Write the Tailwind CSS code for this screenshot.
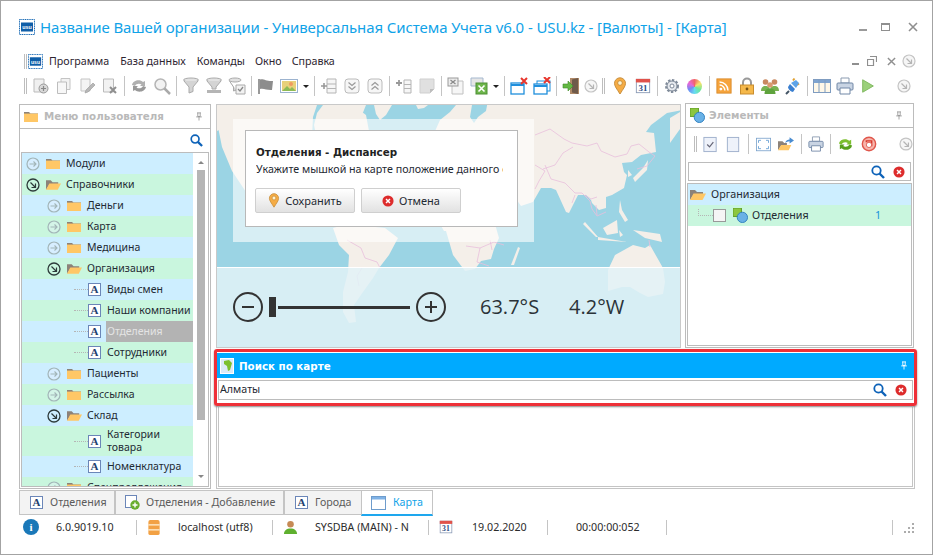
<!DOCTYPE html>
<html lang="ru">
<head>
<meta charset="UTF-8" />
<title>USU</title>
<script src="https://cdn.jsdelivr.net/npm/@tailwindcss/browser@4"></script>
</head>
<body class="m-0 bg-white">
<svg class="absolute w-0 h-0" aria-hidden="true">
  <symbol id="logo" viewBox="0 0 16 16"><rect x=".5" y=".5" width="15" height="15" fill="#fff" stroke="#1a6bb5" stroke-dasharray="1.2 .6"/><rect x="2" y="3.500" width="12" height="9" fill="#0f5ea8"/><text x="8" y="10.300" text-anchor="middle" font-family="Liberation Sans" font-weight="700" font-size="5.400" fill="#fff">usu</text></symbol>
  <symbol id="folder" viewBox="0 0 14 11"><path d="M0 1h5l1.500 1.500H14V3H0z" fill="#8c8279"/><rect y="2.600" width="14" height="8.400" fill="#ffc766"/></symbol>
  <symbol id="folder-open" viewBox="0 0 16 11"><path d="M0 11V1h5l2 2h6v2H4z" fill="#8c8279"/><path d="M0 11l3.500-6.500H16L12.500 11z" fill="#ffc766"/></symbol>
  <symbol id="arrow-r" viewBox="0 0 14 14"><circle cx="7" cy="7" r="6" fill="#eef" fill-opacity=".3" stroke="#a2b5b8" stroke-width="1.200"/><path d="M3.500 7h6.500M7.500 4.500L10 7 7.500 9.500" fill="none" stroke="#a2b5b8" stroke-width="1.100"/></symbol>
  <symbol id="arrow-d" viewBox="0 0 14 14"><circle cx="7" cy="7" r="6" fill="none" stroke="#2d3a3a" stroke-width="1.300"/><path d="M4.500 4.500L9.500 9.500M9.500 5.500v4h-4" fill="none" stroke="#2d3a3a" stroke-width="1.200"/></symbol>
  <symbol id="arrow-g" viewBox="0 0 14 14"><circle cx="7" cy="7" r="6" fill="#f6f6f6" stroke="#c4c4c4" stroke-width="1.200"/><path d="M4.500 4.500L9.500 9.500M9.500 5.500v4h-4" fill="none" stroke="#b5b5b5" stroke-width="1.200"/></symbol>
  <symbol id="lens" viewBox="0 0 14 14"><circle cx="5.500" cy="5.500" r="4.200" fill="none" stroke="#0d62b8" stroke-width="1.800"/><path d="M8.500 8.500L13 13" stroke="#0d62b8" stroke-width="2.400"/></symbol>
  <symbol id="cancel" viewBox="0 0 14 14"><circle cx="7" cy="7" r="6.500" fill="#dd2c2c"/><path d="M4.700 4.700l4.600 4.600M9.300 4.700l-4.600 4.600" stroke="#fff" stroke-width="1.700"/></symbol>
  <symbol id="pin" viewBox="0 0 10 11"><path d="M2.500 1h5M3.500 1v4.500h3V1M1.500 6h7M5 6v4.500" fill="none" stroke="currentColor" stroke-width="1.100"/></symbol>
  <symbol id="marker" viewBox="0 0 14 18"><path d="M7 17C4 12 1.500 9.500 1.500 6.300a5.500 5.500 0 0 1 11 0C12.500 9.500 10 12 7 17z" fill="#f5ac45" stroke="#c9903f"/><circle cx="7" cy="6" r="2.300" fill="#fff3d0" stroke="#b67c2b" stroke-width=".7"/></symbol>
  <symbol id="t-add" viewBox="0 0 18 18"><path d="M2 2h10v13H2z" fill="#f0f0f0" stroke="#bbb"/><circle cx="11.500" cy="11.500" r="4.500" fill="#d8d8d8" stroke="#999"/><path d="M9 11.500h5M11.500 9v5" stroke="#888" stroke-width="1.200"/></symbol>
  <symbol id="t-copy" viewBox="0 0 18 18"><path d="M6 1.500h9v11H6z" fill="#f2f2f2" stroke="#c4c4c4"/><path d="M2.500 5h9v11.500h-9z" fill="#f7f7f7" stroke="#bdbdbd"/></symbol>
  <symbol id="t-edit" viewBox="0 0 18 18"><path d="M3 2h9v12H3z" fill="#f4f4f4" stroke="#c4c4c4"/><path d="M7 16l1-3 7-7 2 2-7 7z" fill="#b8b8b8" stroke="#999" stroke-width=".6"/></symbol>
  <symbol id="t-del" viewBox="0 0 18 18"><path d="M2.500 2h10v13h-10z" fill="#f2f2f2" stroke="#bbb"/><path d="M9 10l6 6M15 10l-6 6" stroke="#8f8f8f" stroke-width="2"/></symbol>
  <symbol id="t-ref" viewBox="0 0 18 18"><path d="M2 8c1-5 8-6 11-3l2-1v5h-5l1.500-1.500C9.500 6 6 6.500 5 9z" fill="#b0b0b0"/><path d="M16 10c-1 5-8 6-11 3l-2 1V9h5l-1.500 1.500c2 1.500 5.500 1 6.500-1.500z" fill="#999"/></symbol>
  <symbol id="t-lens" viewBox="0 0 18 18"><circle cx="7.500" cy="7.500" r="5.500" fill="#f2f2f2" stroke="#b5b5b5" stroke-width="1.500"/><path d="M11.500 11.500L17 17" stroke="#aaa" stroke-width="2.500"/></symbol>
  <symbol id="t-fun" viewBox="0 0 18 18"><ellipse cx="9" cy="3" rx="7.500" ry="2" fill="#e2e2e2" stroke="#aaa"/><path d="M2 4l5 6v6l4-1.500V10l5-6" fill="#d4d4d4" stroke="#aaa"/></symbol>
  <symbol id="t-fun2" viewBox="0 0 18 18"><ellipse cx="9" cy="3" rx="7.500" ry="2" fill="#e2e2e2" stroke="#aaa"/><path d="M2 4l5 6v2h4v-2l5-6" fill="#d4d4d4" stroke="#aaa"/><path d="M2 13h14v3H2z" fill="#b5b5b5"/></symbol>
  <symbol id="t-fun3" viewBox="0 0 18 18"><ellipse cx="7" cy="3" rx="6" ry="2" fill="#e2e2e2" stroke="#aaa"/><path d="M1.500 4l4 6v4l3-1" fill="#d4d4d4" stroke="#aaa"/><path d="M8 8h9v9H8z" fill="#f2f2f2" stroke="#aaa"/><path d="M10 12l2 2 3-4" fill="none" stroke="#888" stroke-width="1.300"/></symbol>
  <symbol id="t-flag" viewBox="0 0 18 18"><path d="M2 2v15" stroke="#777" stroke-width="1.500"/><path d="M3 2.500c4-1 6 2 13 1.500l-1 9c-5 .5-8-2-12-1z" fill="#8d8d8d"/></symbol>
  <symbol id="t-img" viewBox="0 0 18 18"><rect x=".5" y="2.500" width="17" height="13" fill="#fff" stroke="#9cb3cf"/><rect x="2" y="4" width="14" height="10" fill="#e8d07a"/><path d="M2 14l5-5 3 3 2-2 4 4z" fill="#8dbb55"/><circle cx="11" cy="7" r="2" fill="#f09a60"/></symbol>
  <symbol id="t-col" viewBox="0 0 18 18"><path d="M7 2h9v14H7z" fill="#f6f6f6" stroke="#b5b5b5"/><path d="M7 7h9M7 11.500h9" stroke="#b5b5b5"/><path d="M1 9h6M4 6v6" stroke="#999" stroke-width="1.600"/></symbol>
  <symbol id="t-down" viewBox="0 0 18 18"><rect x="2" y="2" width="14" height="14" rx="3" fill="#f6f6f6" stroke="#bbb"/><path d="M5.500 5.500L9 8.500l3.500-3M5.500 9.500L9 12.500l3.500-3" fill="none" stroke="#999" stroke-width="1.200"/></symbol>
  <symbol id="t-up" viewBox="0 0 18 18"><rect x="2" y="2" width="14" height="14" rx="3" fill="#f6f6f6" stroke="#bbb"/><path d="M5.500 8.500L9 5.500l3.500 3M5.500 12.500L9 9.500l3.500 3" fill="none" stroke="#999" stroke-width="1.200"/></symbol>
  <symbol id="t-plus" viewBox="0 0 18 18"><path d="M9 3h7v13H9z" fill="#f6f6f6" stroke="#b5b5b5"/><path d="M9 7.500h7M9 11.500h7" stroke="#b5b5b5"/><path d="M1 6h6M4 3v6" stroke="#999" stroke-width="1.800"/></symbol>
  <symbol id="t-note" viewBox="0 0 18 18"><path d="M2 2h14v10l-4 4H2z" fill="#e0e0e0" stroke="#cfcfcf"/><path d="M12 16v-4h4z" fill="#bdbdbd"/></symbol>
  <symbol id="t-xl" viewBox="0 0 18 18"><path d="M5 4h11v13H5z" fill="#f6f6f6" stroke="#c0c0c0"/><rect x="1" y="1" width="10" height="8" fill="#ececec" stroke="#999"/><path d="M3.500 3l5 4M8.500 3l-5 4" stroke="#888" stroke-width="1.200"/></symbol>
  <symbol id="t-excel" viewBox="0 0 18 18"><path d="M1 1h12v8H1z" fill="#e6e6e6" stroke="#a5b8cf"/><rect x="6" y="6" width="11" height="11" fill="#6db54b" stroke="#4d8f33"/><path d="M8.500 8.500l6 6M14.500 8.500l-6 6" stroke="#fff" stroke-width="1.600"/></symbol>
  <symbol id="t-win1" viewBox="0 0 18 18"><rect x="1" y="6" width="13" height="11" fill="#fff" stroke="#1f8fdc" stroke-width="1.300"/><path d="M1 8h13" stroke="#1f8fdc" stroke-width="2"/><path d="M11 1l6 6M17 1l-6 6" stroke="#e8362d" stroke-width="2"/></symbol>
  <symbol id="t-win2" viewBox="0 0 18 18"><rect x="4" y="4" width="13" height="10" fill="#fff" stroke="#1f8fdc"/><rect x="1" y="7" width="13" height="10" fill="#fff" stroke="#1f8fdc" stroke-width="1.300"/><path d="M1 9h13" stroke="#1f8fdc" stroke-width="2"/><path d="M11 0l6 6M17 0l-6 6" stroke="#e8362d" stroke-width="2"/></symbol>
  <symbol id="t-door" viewBox="0 0 18 18"><path d="M8 1h9v16H8z" fill="#b08a68"/><path d="M10 2.500l6-1.500v16l-6-1.500z" fill="#6f5a4a"/><path d="M1 7h5V4l5 5-5 5v-3H1z" fill="#63b843" stroke="#3f8c28" stroke-width=".6"/></symbol>
  <symbol id="t-cal" viewBox="0 0 18 18"><rect x="1.500" y="1.500" width="15" height="15" fill="#fff" stroke="#8a9ab5"/><rect x="1" y="1" width="16" height="4" fill="#e0524a"/><text x="9" y="14.500" text-anchor="middle" font-family="Liberation Serif" font-weight="700" font-size="10" fill="#2f4c84">31</text></symbol>
  <symbol id="t-gear" viewBox="0 0 18 18"><circle cx="9" cy="9" r="5.500" fill="#e6e9ee" stroke="#7f8a99" stroke-width="3" stroke-dasharray="2.200 1.400"/><circle cx="9" cy="9" r="5" fill="#e6e9ee" stroke="#7f8a99"/><circle cx="9" cy="9" r="2" fill="#fff" stroke="#7f8a99"/></symbol>
  <symbol id="t-rss" viewBox="0 0 18 18"><rect x="1" y="1" width="16" height="16" fill="#f6a43c" stroke="#d98a2b"/><circle cx="5.500" cy="12.500" r="1.600" fill="#fff"/><path d="M4 8a6 6 0 0 1 6 6M4 4.500A9.500 9.500 0 0 1 13.500 14" fill="none" stroke="#fff" stroke-width="1.700"/></symbol>
  <symbol id="t-lock" viewBox="0 0 18 18"><path d="M5 8V5.500a4 4 0 0 1 8 0V8" fill="none" stroke="#999" stroke-width="2"/><rect x="2.500" y="8" width="13" height="9" fill="#f5b84a" stroke="#c98d2e"/><circle cx="9" cy="12" r="1.400" fill="#7a5412"/></symbol>
  <symbol id="t-users" viewBox="0 0 18 18"><circle cx="4.500" cy="5" r="2.800" fill="#c98860"/><circle cx="13.500" cy="5" r="2.800" fill="#c98860"/><path d="M0 14c0-4 2-5 4.500-5s4.500 1 4.500 5zM9 14c0-4 2-5 4.500-5s4.500 1 4.500 5z" fill="#79b251"/><circle cx="9" cy="8" r="2.800" fill="#d89a70"/><path d="M3.500 17c0-4 2-5.500 5.500-5.500s5.500 1.500 5.500 5.500z" fill="#5fa33d"/></symbol>
  <symbol id="t-plug" viewBox="0 0 18 18"><path d="M6 7l5 5-2 3c-2 0-5-3-5-5z" fill="#3a7fd0"/><path d="M9 3.500l1.500-2M13 8l2-1.500" stroke="#e0a030" stroke-width="2"/><path d="M7 6l5-3 3 3-3 5z" fill="#5da3e8"/><path d="M5 14l-3 3" stroke="#456" stroke-width="2"/></symbol>
  <symbol id="t-table" viewBox="0 0 18 18"><rect x=".5" y="2.500" width="17" height="13" fill="#fff8e8" stroke="#7f9cc0"/><rect x="1" y="3" width="16" height="3" fill="#7fa4d0"/><path d="M6 3v12M12 3v12" stroke="#7f9cc0"/></symbol>
  <symbol id="t-print" viewBox="0 0 18 18"><path d="M5 1h8v5H5z" fill="#fff" stroke="#8b9bb0"/><rect x="1" y="6" width="16" height="7" rx="1" fill="#c9d4e3" stroke="#7187a6"/><path d="M4 11h10v6H4z" fill="#fff" stroke="#7187a6"/></symbol>
  <symbol id="t-play" viewBox="0 0 18 18"><path d="M3 2l12 7-12 7z" fill="#9bd07a" stroke="#7bb65a"/></symbol>
  <symbol id="t-check" viewBox="0 0 18 18"><rect x="2" y="1.500" width="13" height="15" fill="#eef2fa" stroke="#9fb0cc"/><path d="M5.500 9l2.500 2.500 4-5" fill="none" stroke="#667" stroke-width="1.300"/></symbol>
  <symbol id="t-blank" viewBox="0 0 18 18"><rect x="2.500" y="1.500" width="12" height="15" fill="#eef2fa" stroke="#9fb0cc"/></symbol>
  <symbol id="t-full" viewBox="0 0 18 18"><rect x=".5" y="1.500" width="17" height="15" fill="#fff" stroke="#7ca3cc"/><path d="M3 4h3M3 4v3M15 4h-3M15 4v3M3 14h3M3 14v-3M15 14h-3M15 14v-3" stroke="#5f9bd3" fill="none"/></symbol>
  <symbol id="t-share" viewBox="0 0 18 18"><path d="M0 16V6h5l2 2h3v2H4z" fill="#8c8279"/><path d="M0 16l3.500-6H15l-3 6z" fill="#ffc766"/><path d="M8 8c1-3 3-4 5-4V1.500L18 5l-5 3.500V6c-2 0-3 1-5 2z" fill="#4a8cd0"/></symbol>
  <symbol id="t-sync" viewBox="0 0 18 18"><path d="M2 8c1-5 8-6 11-3l2-1v5h-5l1.500-1.500C9.500 6 6 6.500 5 9z" fill="#7cbf2e"/><path d="M16 10c-1 5-8 6-11 3l-2 1V9h5l-1.500 1.500c2 1.500 5.500 1 6.500-1.500z" fill="#58a01c"/></symbol>
  <symbol id="t-stop" viewBox="0 0 18 18"><circle cx="9" cy="9" r="7.500" fill="#f7b5ac" stroke="#e0574c" stroke-width="1.600"/><path d="M6 7V5.500h6v6" fill="none" stroke="#d8392d" stroke-width="1.600"/><circle cx="9" cy="10" r="3" fill="#fff" stroke="#e0574c"/></symbol>
  <symbol id="elem" viewBox="0 0 16 16"><rect x="0" y="0" width="9" height="9" fill="#8cc63f" stroke="#5c9a23"/><circle cx="10" cy="10" r="5.500" fill="#69b1e6" stroke="#2f7fbf"/></symbol>
  <symbol id="user" viewBox="0 0 16 16"><circle cx="8" cy="4.500" r="3.500" fill="#c68a55"/><path d="M1 15c0-4 3-6 7-6s7 2 7 6z" fill="#5fb02f"/></symbol>
  <symbol id="db" viewBox="0 0 12 16"><rect width="12" height="16" rx="2" fill="#f2a144"/><path d="M0 5.300h12M0 10.600h12" stroke="#fff1d6" stroke-width="1.300"/></symbol>
  <symbol id="africa" viewBox="0 0 14 16"><rect x=".5" y=".5" width="13" height="15" fill="#dbeaf7" stroke="#fff"/><path d="M4 3l5-1 3 3-2 7-2 1-1-5-3-2z" fill="#7cc02f"/></symbol>
  <symbol id="doc-add" viewBox="0 0 15 15"><rect x=".5" y=".5" width="11" height="12" fill="#fff" stroke="#6b86b8"/><circle cx="10" cy="10" r="4.700" fill="#69ad2f"/><path d="M7.500 10h5M10 7.500v5" stroke="#fff" stroke-width="1.400"/></symbol>
  <symbol id="win" viewBox="0 0 15 14"><rect x=".5" y=".5" width="14" height="13" fill="#fff" stroke="#6e9ccc"/><rect x="1" y="1" width="13" height="2.500" fill="#7fb2e6"/></symbol>
</svg>

<div class="relative w-[933px] h-[555px] overflow-hidden border border-[#a3a3a3] bg-white text-[10.700px] text-[#1f2a33] font-['Noto_Sans',sans-serif] leading-none">
  <!-- title -->
  <div class="flex items-center h-[50px] pl-[18px] pr-[14px] pt-[2px]">
    <svg class="w-4 h-4 mr-[5px]"><use href="#logo"/></svg>
    <span class="text-[15px] text-[#11a3e8] whitespace-nowrap tracking-[-0.1px]">Название Вашей организации - Универсальная Система Учета v6.0 - USU.kz - [Валюты] - [Карта]</span>
    <div class="ml-auto flex items-center text-[#8f8f8f]">
      <span class="w-[8px] h-[2px] bg-[#9a9a9a] mt-[6px] mr-[14px]"></span>
      <span class="w-[9px] h-[8px] border border-[#8f8f8f] border-t-2 mr-[18px]"></span>
      <svg class="w-[10px] h-[10px]" viewBox="0 0 10 10"><path d="M1 1l8 8M9 1l-8 8" stroke="#8f8f8f" stroke-width="1.600"/></svg>
    </div>
  </div>
  <!-- menu -->
  <div class="flex items-center h-[20px] pl-[23px] pr-[16px] text-[#2d2530]">
    <span class="w-[3px] h-[15px] border-x border-[#bdbdbd] mr-[1px]"></span>
    <svg class="w-[15px] h-[15px] mr-[6px]"><use href="#logo"/></svg>
    <span class="mr-[11px]">Программа</span>
    <span class="mr-[11px]">База данных</span>
    <span class="mr-[10px]">Команды</span>
    <span class="mr-[10px]">Окно</span>
    <span>Справка</span>
    <div class="ml-auto flex items-center">
      <span class="w-[7px] h-[2px] bg-[#8f8f8f] mt-[6px] mr-[8px]"></span>
      <svg class="w-[10px] h-[10px] mr-[10px]" viewBox="0 0 10 10"><path d="M3 .5h6.500V6M.5 3.500h6v6h-6z" fill="none" stroke="#8f8f8f" stroke-width="1.200"/></svg>
      <svg class="w-[9px] h-[9px] mr-[6px]" viewBox="0 0 10 10"><path d="M1 1l8 8M9 1l-8 8" stroke="#8f8f8f" stroke-width="1.600"/></svg>
      <svg class="w-[14px] h-[14px]"><use href="#arrow-g"/></svg>
    </div>
  </div>
  <!-- toolbar -->
  <div class="flex items-center h-[20px] mt-[5px] pl-[23px]">
    <span class="w-[3px] h-[16px] border-x border-[#bdbdbd] mr-[2px]"></span>
    <span class="flex justify-center w-[23px]"><svg class="w-[18px] h-[18px]"><use href="#t-add"/></svg></span>
    <span class="flex justify-center w-[23px]"><svg class="w-[18px] h-[18px]"><use href="#t-copy"/></svg></span>
    <span class="flex justify-center w-[23px]"><svg class="w-[18px] h-[18px]"><use href="#t-edit"/></svg></span>
    <span class="flex justify-center w-[23px]"><svg class="w-[18px] h-[18px]"><use href="#t-del"/></svg></span>
    <span class="w-px h-[20px] bg-[#c4c4c4] ml-[3px] mr-[2px]"></span>
    <span class="flex justify-center w-[23px]"><svg class="w-[18px] h-[18px]"><use href="#t-ref"/></svg></span>
    <span class="flex justify-center w-[23px]"><svg class="w-[18px] h-[18px]"><use href="#t-lens"/></svg></span>
    <span class="w-px h-[20px] bg-[#c4c4c4] ml-[3px] mr-[2px]"></span>
    <span class="flex justify-center w-[23px]"><svg class="w-[18px] h-[18px]"><use href="#t-fun"/></svg></span>
    <span class="flex justify-center w-[23px]"><svg class="w-[18px] h-[18px]"><use href="#t-fun2"/></svg></span>
    <span class="flex justify-center w-[23px]"><svg class="w-[18px] h-[18px]"><use href="#t-fun3"/></svg></span>
    <span class="w-px h-[20px] bg-[#c4c4c4] ml-[3px] mr-[2px]"></span>
    <span class="flex justify-center w-[23px]"><svg class="w-[18px] h-[18px]"><use href="#t-flag"/></svg></span>
    <span class="flex justify-center w-[23px]"><svg class="w-[18px] h-[18px]"><use href="#t-img"/></svg></span>
    <span class="w-[11px] flex justify-center"><span class="border-x-[3px] border-t-[3px] border-x-transparent border-t-[#222]"></span></span>
    <span class="w-px h-[20px] bg-[#c4c4c4] ml-[3px] mr-[2px]"></span>
    <span class="flex justify-center w-[23px]"><svg class="w-[18px] h-[18px]"><use href="#t-col"/></svg></span>
    <span class="flex justify-center w-[23px]"><svg class="w-[18px] h-[18px]"><use href="#t-down"/></svg></span>
    <span class="flex justify-center w-[23px]"><svg class="w-[18px] h-[18px]"><use href="#t-up"/></svg></span>
    <span class="w-px h-[20px] bg-[#c4c4c4] ml-[3px] mr-[2px]"></span>
    <span class="flex justify-center w-[23px]"><svg class="w-[18px] h-[18px]"><use href="#t-plus"/></svg></span>
    <span class="flex justify-center w-[23px]"><svg class="w-[18px] h-[18px]"><use href="#t-note"/></svg></span>
    <span class="w-px h-[20px] bg-[#c4c4c4] ml-[3px] mr-[2px]"></span>
    <span class="flex justify-center w-[23px]"><svg class="w-[18px] h-[18px]"><use href="#t-xl"/></svg></span>
    <span class="flex justify-center w-[23px]"><svg class="w-[18px] h-[18px]"><use href="#t-excel"/></svg></span>
    <span class="w-[11px] flex justify-center"><span class="border-x-[3px] border-t-[3px] border-x-transparent border-t-[#222]"></span></span>
    <span class="w-px h-[20px] bg-[#c4c4c4] ml-[3px] mr-[2px]"></span>
    <span class="flex justify-center w-[23px]"><svg class="w-[18px] h-[18px]"><use href="#t-win1"/></svg></span>
    <span class="flex justify-center w-[23px]"><svg class="w-[18px] h-[18px]"><use href="#t-win2"/></svg></span>
    <span class="w-px h-[20px] bg-[#c4c4c4] ml-[3px] mr-[2px]"></span>
    <span class="flex justify-center w-[23px]"><svg class="w-[18px] h-[18px]"><use href="#t-door"/></svg></span>
    <span class="flex justify-center w-[17px]"><svg class="w-[14px] h-[14px]"><use href="#arrow-g"/></svg></span>
    <span class="w-[3px] h-[16px] border-x border-[#bdbdbd] mx-[3px]"></span>
    <span class="flex justify-center w-[23px]"><svg class="w-[16px] h-[18px]"><use href="#marker"/></svg></span>
    <span class="flex justify-center w-[23px]"><svg class="w-[16px] h-[16px]"><use href="#t-cal"/></svg></span>
    <span class="w-px h-[20px] bg-[#c4c4c4] ml-[3px] mr-[2px]"></span>
    <span class="flex justify-center w-[23px]"><svg class="w-[18px] h-[18px]"><use href="#t-gear"/></svg></span>
    <span class="flex justify-center w-[23px]"><span class="w-[15px] h-[15px] rounded-full bg-[conic-gradient(#f2636b,#f7e36a,#6fe89a,#66dbf0,#6f8cf5,#e667d8,#f2636b)]"></span></span>
    <span class="w-px h-[20px] bg-[#c4c4c4] ml-[3px] mr-[2px]"></span>
    <span class="flex justify-center w-[23px]"><svg class="w-[16px] h-[16px]"><use href="#t-rss"/></svg></span>
    <span class="flex justify-center w-[23px]"><svg class="w-[18px] h-[18px]"><use href="#t-lock"/></svg></span>
    <span class="flex justify-center w-[23px]"><svg class="w-[18px] h-[18px]"><use href="#t-users"/></svg></span>
    <span class="flex justify-center w-[23px]"><svg class="w-[18px] h-[18px]"><use href="#t-plug"/></svg></span>
    <span class="w-px h-[20px] bg-[#c4c4c4] ml-[3px] mr-[2px]"></span>
    <span class="flex justify-center w-[23px]"><svg class="w-[18px] h-[18px]"><use href="#t-table"/></svg></span>
    <span class="flex justify-center w-[23px]"><svg class="w-[18px] h-[18px]"><use href="#t-print"/></svg></span>
    <span class="flex justify-center w-[23px]"><svg class="w-[16px] h-[16px]"><use href="#t-play"/></svg></span>
    <svg class="w-[14px] h-[14px] ml-[18px]"><use href="#arrow-g"/></svg>
  </div>

  <!-- main -->
  <div class="flex mt-[8px] ml-[18px] h-[385px]">
    <!-- user menu -->
    <section class="flex flex-col w-[192px] h-[385px] border border-[#bcbcbc] mr-[5px]">
      <div class="flex items-center h-[24px] pl-[4px] pr-[7px] border-b border-[#bcbcbc]">
        <svg class="w-[14px] h-[11px] mr-[6px]"><use href="#folder"/></svg>
        <span class="font-bold text-[#b9b9b9] font-['DejaVu_Sans',sans-serif] text-[10.300px]">Меню пользователя</span>
        <svg class="w-[8px] h-[9px] ml-auto text-[#999]"><use href="#pin"/></svg>
      </div>
      <div class="flex items-center justify-end h-[23px] pr-[7px]"><svg class="w-[13px] h-[13px]"><use href="#lens"/></svg></div>
      <div class="relative flex flex-1 mx-[1px] mb-[1px] border border-[#bcbcbc] overflow-hidden text-[10.500px]">
        <div class="relative flex-1 overflow-hidden whitespace-nowrap">
          <span class="absolute left-[10px] top-[16px] h-[320px] border-l border-dotted border-[#b5b5b5]"></span>
          <span class="absolute left-[52px] top-[116px] h-[84px] border-l border-dotted border-[#b5b5b5]"></span>
          <span class="absolute left-[52px] top-[262px] h-[50px] border-l border-dotted border-[#b5b5b5]"></span>
          <div class="relative flex items-center h-[21px] bg-[#cdeeff] pl-[4px]"><svg class="w-[14px] h-[14px] mr-[6px] shrink-0"><use href="#arrow-r"/></svg><svg class="w-[14px] h-[11px] mr-[6px]"><use href="#folder"/></svg>Модули</div>
          <div class="relative flex items-center h-[21px] bg-[#c9f6de] pl-[4px]"><svg class="w-[14px] h-[14px] mr-[6px] shrink-0"><use href="#arrow-d"/></svg><svg class="w-[15px] h-[11px] mr-[5px]"><use href="#folder-open"/></svg>Справочники</div>
          <div class="relative flex items-center h-[21px] bg-[#cdeeff] pl-[25px]"><svg class="w-[14px] h-[14px] mr-[6px] shrink-0"><use href="#arrow-r"/></svg><svg class="w-[14px] h-[11px] mr-[6px]"><use href="#folder"/></svg>Деньги</div>
          <div class="relative flex items-center h-[21px] bg-[#c9f6de] pl-[25px]"><svg class="w-[14px] h-[14px] mr-[6px] shrink-0"><use href="#arrow-r"/></svg><svg class="w-[14px] h-[11px] mr-[6px]"><use href="#folder"/></svg>Карта</div>
          <div class="relative flex items-center h-[21px] bg-[#cdeeff] pl-[25px]"><svg class="w-[14px] h-[14px] mr-[6px] shrink-0"><use href="#arrow-r"/></svg><svg class="w-[14px] h-[11px] mr-[6px]"><use href="#folder"/></svg>Медицина</div>
          <div class="relative flex items-center h-[21px] bg-[#c9f6de] pl-[25px]"><svg class="w-[14px] h-[14px] mr-[6px] shrink-0"><use href="#arrow-d"/></svg><svg class="w-[15px] h-[11px] mr-[5px]"><use href="#folder-open"/></svg>Организация</div>
          <div class="relative flex items-center h-[21px] bg-[#cdeeff] pl-[53px]"><span class="w-[14px] border-t border-dotted border-[#b5b5b5] mr-0 -ml-[1px]"></span><span class="flex items-center justify-center shrink-0 w-[13px] h-[13px] bg-white border border-[#6b86b8] text-[#23406f] font-bold text-[11px] font-['Liberation_Serif',serif] mr-[6px]">A</span>Виды смен</div>
          <div class="relative flex items-center h-[21px] bg-[#c9f6de] pl-[53px]"><span class="w-[14px] border-t border-dotted border-[#b5b5b5] mr-0 -ml-[1px]"></span><span class="flex items-center justify-center shrink-0 w-[13px] h-[13px] bg-white border border-[#6b86b8] text-[#23406f] font-bold text-[11px] font-['Liberation_Serif',serif] mr-[6px]">A</span>Наши компании</div>
          <div class="relative flex items-center h-[21px] bg-[#cdeeff] pl-[53px]"><span class="w-[14px] border-t border-dotted border-[#b5b5b5] mr-0 -ml-[1px]"></span><span class="flex items-center justify-center shrink-0 w-[13px] h-[13px] bg-white border border-[#6b86b8] text-[#23406f] font-bold text-[11px] font-['Liberation_Serif',serif] mr-[5px]">A</span><span class="flex items-center flex-1 h-full bg-[#b3b3b3] text-[#e4e4e4] pl-[1px]">Отделения</span></div>
          <div class="relative flex items-center h-[21px] bg-[#c9f6de] pl-[53px]"><span class="w-[14px] border-t border-dotted border-[#b5b5b5] mr-0 -ml-[1px]"></span><span class="flex items-center justify-center shrink-0 w-[13px] h-[13px] bg-white border border-[#6b86b8] text-[#23406f] font-bold text-[11px] font-['Liberation_Serif',serif] mr-[6px]">A</span>Сотрудники</div>
          <div class="relative flex items-center h-[21px] bg-[#cdeeff] pl-[25px]"><svg class="w-[14px] h-[14px] mr-[6px] shrink-0"><use href="#arrow-r"/></svg><svg class="w-[14px] h-[11px] mr-[6px]"><use href="#folder"/></svg>Пациенты</div>
          <div class="relative flex items-center h-[21px] bg-[#c9f6de] pl-[25px]"><svg class="w-[14px] h-[14px] mr-[6px] shrink-0"><use href="#arrow-r"/></svg><svg class="w-[14px] h-[11px] mr-[6px]"><use href="#folder"/></svg>Рассылка</div>
          <div class="relative flex items-center h-[21px] bg-[#cdeeff] pl-[25px]"><svg class="w-[14px] h-[14px] mr-[6px] shrink-0"><use href="#arrow-d"/></svg><svg class="w-[15px] h-[11px] mr-[5px]"><use href="#folder-open"/></svg>Склад</div>
          <div class="relative flex items-center h-[30px] bg-[#c9f6de] pl-[53px]"><span class="w-[14px] border-t border-dotted border-[#b5b5b5] mr-0 -ml-[1px]"></span><span class="flex items-center justify-center shrink-0 w-[13px] h-[13px] bg-white border border-[#6b86b8] text-[#23406f] font-bold text-[11px] font-['Liberation_Serif',serif] mr-[6px]">A</span><span class="leading-[13px]">Категории<br />товара</span></div>
          <div class="relative flex items-center h-[21px] bg-[#cdeeff] pl-[53px]"><span class="w-[14px] border-t border-dotted border-[#b5b5b5] mr-0 -ml-[1px]"></span><span class="flex items-center justify-center shrink-0 w-[13px] h-[13px] bg-white border border-[#6b86b8] text-[#23406f] font-bold text-[11px] font-['Liberation_Serif',serif] mr-[6px]">A</span>Номенклатура</div>
          <div class="relative flex items-center h-[21px] bg-[#c9f6de] pl-[25px]"><svg class="w-[14px] h-[14px] mr-[6px] shrink-0"><use href="#arrow-r"/></svg><svg class="w-[14px] h-[11px] mr-[6px]"><use href="#folder"/></svg>Спецпредложения</div>
        </div>
        <!-- scrollbar -->
        <div class="flex flex-col items-center w-[15px] shrink-0 bg-white pt-[8px]">
          <span class="border-x-[3px] border-b-[3px] border-x-transparent border-b-[#888]"></span>
          <span class="w-[8px] h-[250px] bg-[#b5b5b5] mt-[6px]"></span>
          <span class="border-x-[3px] border-t-[3px] border-x-transparent border-t-[#888] mt-auto mb-[8px]"></span>
        </div>
      </div>
    </section>

    <div class="flex flex-col w-[700px]">
      <div class="flex h-[244px]">
        <!-- map -->
        <div class="relative w-[465px] h-[244px] border border-[#c9c9c9] bg-[#9bd4e4] overflow-hidden">
          <svg class="absolute inset-0 w-full h-full" viewBox="217 105 463 242" preserveAspectRatio="none">
            <g fill="#f4efe9">
              <path d="M217 105h106l-6 8-3 12 2 10 14 2 6 14 28-12 2-12-4-12 4-10h0l-8 0-6-8h-5l-6 0-4-2-8-2zM217 122l16-6 5 7 10 2 8 12 30 60-30 10-24-36-10-24-5-25z"/>
              <path d="M217 105h100l-4 12-1 20 30 8 6-18 10-18 8 6 3 16-6 30-80 40-26-30-16-34-8-14-16 8z"/>
              <path d="M330 105h14l4 6-8 3-8-4z"/>
              <path d="M374 105h18l-6 10-6 5-4-6z"/>
              <path d="M416 105h12l-4 3-6 1z"/>
              <path d="M333 228l14-4 38 4 13 10-9 17-10 13-6 10-10 14-9 13 2 17-7 1-6-11 0-20 5-20 1-17-10-10z"/>
              <path d="M440 120l10-8 6-7h16l-2 12 4 6 4-6 8-6 2-11h190l4 10-15 3-16 12-5 7 8 1 2 19-15 3-9 7-10 1 2 9 3 3-3 13-12 7-6 2 0 11-7 2-7-7-1-3-5-5-8 0-9 18-3-1-10-22-5-2-10 0-8 14-12 4-14-20-8-22-16 0-6 10 4 16 4 20 6 12 4 2 4 14-5 11-3 10-10 2-6 8-10 2-6-8-6-8-7-24-2 0-8-14-20-6-6-18 8-18 2-10z"/>
              <path d="M670 143v-25l10-6v17z"/>
              <path d="M648 160l-1 10-12 12-2-4 10-10z"/>
              <path d="M628 170l4 5-4 2z"/>
              <path d="M620 200l2 10 6 10-3 2-6-10z"/>
              <path d="M585 222l13 15-2 0-13-13zM598 237l29 5-29-2z"/>
              <path d="M603 228l14-8 1 13-11 2zM619 230l4 5-3 2z"/>
              <path d="M633 230l27 4 2 8-17-4z"/>
              <path d="M511 265l7-18 2 1-6 17z"/>
              <path d="M608 270l7-15 18-10 12 3 5-3 13 23 2 14-2 12-15 3-8-4-10-6-8 0-14 4z"/>
            </g>
            <g fill="none" stroke="#e9bfdc" stroke-width=".8">
              <path d="M535 135l15-6 14 10 8 4 15 3 10-3 4 8 14 6 12-3 4-8 8-2 10 8 6 4-8 10-10 3M573 147l-10 6-8 12-12 4M545 165l6 14 14 4 10 10 7 0 8 8 2 8 5 7 9-4M535 165l10 6 -6 10-4 8M575 195l-3 8M585 195l6 4 6-2M597 215l-1-10"/>
              <path d="M649 240l1 7M347 240l14 8 4 10 12 4 4 8M362 268l-5 8 2 10M466 246l14 2 14-6 10 3M480 248l-3 14 12 4M490 240l2 10"/>
            </g>
          </svg>
          <!-- popup -->
          <div class="absolute left-[16px] top-[14px] w-[301px] h-[123px] bg-white/60 p-[11px]">
            <div class="w-[273px] h-[97px] ml-[1px] border border-[#b8b8b8] bg-white pt-[16px] pl-[9px]">
              <div class="font-bold font-['DejaVu_Sans',sans-serif] text-[10.300px] text-[#222] mb-[7px] ml-[1px]">Отделения - Диспансер</div>
              <div class="w-[247px] overflow-hidden whitespace-nowrap ml-[1px] mb-[13px]">Укажите мышкой на карте положение данного объекта</div>
              <div class="flex gap-[6px]">
                <div class="flex items-center justify-center gap-[5px] w-[100px] h-[25px] border border-[#cfcfcf] rounded-[2px] bg-linear-to-b from-white to-[#e2e2e2] text-[11px]"><svg class="w-[12px] h-[15px]"><use href="#marker"/></svg>Сохранить</div>
                <div class="flex items-center justify-center gap-[5px] w-[100px] h-[25px] border border-[#cfcfcf] rounded-[2px] bg-linear-to-b from-white to-[#e2e2e2] text-[11px]"><svg class="w-[12px] h-[12px]"><use href="#cancel"/></svg>Отмена</div>
              </div>
            </div>
          </div>
          <!-- coordinates -->
          <div class="absolute left-0 right-0 bottom-0 h-[80px] flex items-center bg-[#e2f2f7]/85 border-t border-white pl-[16px] pb-[1px] text-[#2b3338]">
            <span class="flex items-center justify-center w-[30px] h-[30px] rounded-full border-2 border-[#333]"><span class="w-[12px] h-[2.500px] bg-[#333]"></span></span>
            <span class="w-[7px] h-[20px] bg-[#333] ml-[6px] mr-[2px]"></span>
            <span class="w-[132px] h-[3px] bg-[#333]"></span>
            <span class="relative flex items-center justify-center w-[30px] h-[30px] rounded-full border-2 border-[#333] ml-[6px]"><span class="w-[12px] h-[2.500px] bg-[#333]"></span><span class="absolute w-[2.500px] h-[12px] bg-[#333]"></span></span>
            <span class="ml-[34px] text-[20px] font-['Open_Sans',sans-serif]">63.7°S</span>
            <span class="ml-[30px] text-[20px] font-['Open_Sans',sans-serif]">4.2°W</span>
          </div>
        </div>
        <!-- elements -->
        <section class="flex flex-col w-[229px] h-[245px] ml-[4px] -mt-[1px] border border-[#bcbcbc]">
          <div class="flex items-center h-[24px] pl-[4px] pr-[10px] border-b border-[#bcbcbc]">
            <svg class="w-[15px] h-[15px] mr-[4px]"><use href="#elem"/></svg>
            <span class="font-bold text-[#b9b9b9] font-['DejaVu_Sans',sans-serif] text-[10.300px]">Элементы</span>
            <svg class="w-[8px] h-[9px] ml-auto text-[#999]"><use href="#pin"/></svg>
          </div>
          <div class="flex items-center h-[20px] mt-[6px] pl-[8px]">
            <span class="w-[3px] h-[16px] border-x border-[#bdbdbd] mr-[2px]"></span>
            <span class="flex justify-center w-[23px]"><svg class="w-[17px] h-[17px]"><use href="#t-check"/></svg></span>
            <span class="flex justify-center w-[23px]"><svg class="w-[17px] h-[17px]"><use href="#t-blank"/></svg></span>
            <span class="w-px h-[20px] bg-[#c4c4c4] mx-[3px]"></span>
            <span class="flex justify-center w-[23px]"><svg class="w-[15px] h-[15px]"><use href="#t-full"/></svg></span>
            <span class="flex justify-center w-[23px]"><svg class="w-[16px] h-[16px]"><use href="#t-share"/></svg></span>
            <span class="w-px h-[20px] bg-[#c4c4c4] mx-[3px]"></span>
            <span class="flex justify-center w-[23px]"><svg class="w-[16px] h-[16px]"><use href="#t-print"/></svg></span>
            <span class="w-px h-[20px] bg-[#c4c4c4] mx-[3px]"></span>
            <span class="flex justify-center w-[23px]"><svg class="w-[17px] h-[17px]"><use href="#t-sync"/></svg></span>
            <span class="flex justify-center w-[23px]"><svg class="w-[16px] h-[16px]"><use href="#t-stop"/></svg></span>
            <svg class="w-[14px] h-[14px] ml-[19px]"><use href="#arrow-g"/></svg>
          </div>
          <div class="flex items-center justify-end h-[19px] mx-[2px] mt-[8px] border border-[#bcbcbc] pr-[5px] gap-[8px]">
            <svg class="w-[14px] h-[14px]"><use href="#lens"/></svg>
            <svg class="w-[12px] h-[12px]"><use href="#cancel"/></svg>
          </div>
          <div class="flex-1 mx-[1px] mt-[2px] mb-[1px] border border-[#bcbcbc]">
            <div class="flex items-center h-[21px] bg-[#cdeeff] pl-[2px]"><svg class="w-[16px] h-[11px] mr-[5px]"><use href="#folder-open"/></svg>Организация</div>
            <div class="flex items-center h-[21px] bg-[#c9f6de] pl-[10px] pr-[30px]">
              <span class="w-[15px] h-[7px] -mt-[7px] border-l border-b border-dotted border-[#b5b5b5]"></span>
              <span class="w-[13px] h-[13px] border border-[#999] bg-[#f5f5f5] mr-[7px]"></span>
              <svg class="w-[15px] h-[15px] mr-[4px]"><use href="#elem"/></svg>Отделения
              <span class="ml-auto text-[#1593dc]">1</span>
            </div>
          </div>
        </section>
      </div>
      <!-- search -->
      <section class="relative w-[703px] h-[57px] -ml-[2px] mt-[1px] border-[3px] border-[#ee3038] rounded-[3px] shadow-[0_1px_2px_#888]">
        <div class="flex items-center h-[26px] border-t border-white bg-[#00aaff] pl-[3px] pr-[6px] text-white">
          <svg class="w-[14px] h-[16px] mr-[5px]"><use href="#africa"/></svg>
          <span class="font-bold font-['DejaVu_Sans',sans-serif] text-[10.300px] pt-[1px]">Поиск по карте</span>
          <svg class="w-[8px] h-[9px] ml-auto"><use href="#pin"/></svg>
        </div>
        <div class="flex items-center h-[20px] mx-[1px] mt-[2px] border border-[#bcbcbc] pl-[1px] pr-[5px] gap-[8px]">
          <span class="mr-auto pb-[1px]">Алматы</span>
          <svg class="w-[14px] h-[14px]"><use href="#lens"/></svg>
          <svg class="w-[12px] h-[12px]"><use href="#cancel"/></svg>
        </div>
      </section>
      <div class="w-[699px] h-[83px] border border-[#c4c4c4] border-t-0 p-[1px]"><div class="h-full border border-[#c4c4c4] border-t-0"></div></div>
    </div>
  </div>

  <!-- tabs -->
  <div class="flex h-[26px] mt-[1px] ml-[18px] text-[#5c5c5c]">
    <div class="flex items-center w-[97px] h-[25px] bg-[#f3f3f3] border border-[#c4c4c4] border-r-2 pl-[10px]"><span class="flex items-center justify-center shrink-0 w-[13px] h-[13px] bg-white border border-[#6b86b8] text-[#23406f] font-bold text-[11px] font-['Liberation_Serif',serif] mr-[7px]">A</span>Отделения</div>
    <div class="flex items-center w-[169px] h-[25px] bg-[#f3f3f3] border-y border-r-2 border-[#c4c4c4] pl-[9px]"><svg class="w-[15px] h-[15px] mr-[6px]"><use href="#doc-add"/></svg>Отделения - Добавление</div>
    <div class="flex items-center w-[76px] h-[25px] bg-[#f3f3f3] border-y border-[#c4c4c4] pl-[10px]"><span class="flex items-center justify-center shrink-0 w-[13px] h-[13px] bg-white border border-[#6b86b8] text-[#23406f] font-bold text-[11px] font-['Liberation_Serif',serif] mr-[7px]">A</span>Города</div>
    <div class="flex items-center w-[72px] h-[26px] bg-white border-x border-t border-[#c4c4c4] border-b-2 border-b-[#1ea7ee] pl-[9px] text-[#11a3e8]"><svg class="w-[15px] h-[14px] mr-[7px]"><use href="#win"/></svg>Карта</div>
  </div>

  <!-- status bar -->
  <div class="flex items-center h-[18px] mt-[2px] ml-[22px] text-[#2b2b2b]">
    <span class="flex items-center justify-center w-[16px] h-[16px] rounded-full bg-[#1a78b8] text-white font-bold text-[11px] font-['Liberation_Serif',serif]">i</span>
    <span class="ml-[17px] w-[80px]">6.0.9019.10</span>
    <span class="w-px h-[15px] bg-[#c4c4c4]"></span>
    <svg class="w-[12px] h-[15px] ml-[11px]"><use href="#db"/></svg>
    <span class="ml-[18px] w-[94px]">localhost (utf8)</span>
    <span class="w-px h-[15px] bg-[#c4c4c4]"></span>
    <svg class="w-[15px] h-[15px] ml-[10px]"><use href="#user"/></svg>
    <span class="ml-[17px] w-[113px] whitespace-nowrap">SYSDBA (MAIN) - N</span>
    <span class="w-px h-[15px] bg-[#c4c4c4]"></span>
    <svg class="w-[14px] h-[14px] ml-[10px]"><use href="#t-cal"/></svg>
    <span class="ml-[19px] w-[75px]">19.02.2020</span>
    <span class="w-px h-[15px] bg-[#c4c4c4]"></span>
    <span class="ml-[28px] w-[90px]">00:00:00:052</span>
    <span class="w-px h-[15px] bg-[#c4c4c4]"></span>
    <span class="w-px h-[15px] bg-[#c4c4c4] ml-[225px]"></span>
    <svg class="w-[12px] h-[12px] ml-[11px] mt-[3px]" viewBox="0 0 12 12"><path d="M9 0v2M9 4v2M9 8v2M5 4v2M5 8v2M1 8v2M8 1h2M8 5h2M8 9h2M4 5h2M4 9h2M0 9h2" stroke="#888" stroke-width=".9"/></svg>
  </div>
</div>
</body>
</html>
